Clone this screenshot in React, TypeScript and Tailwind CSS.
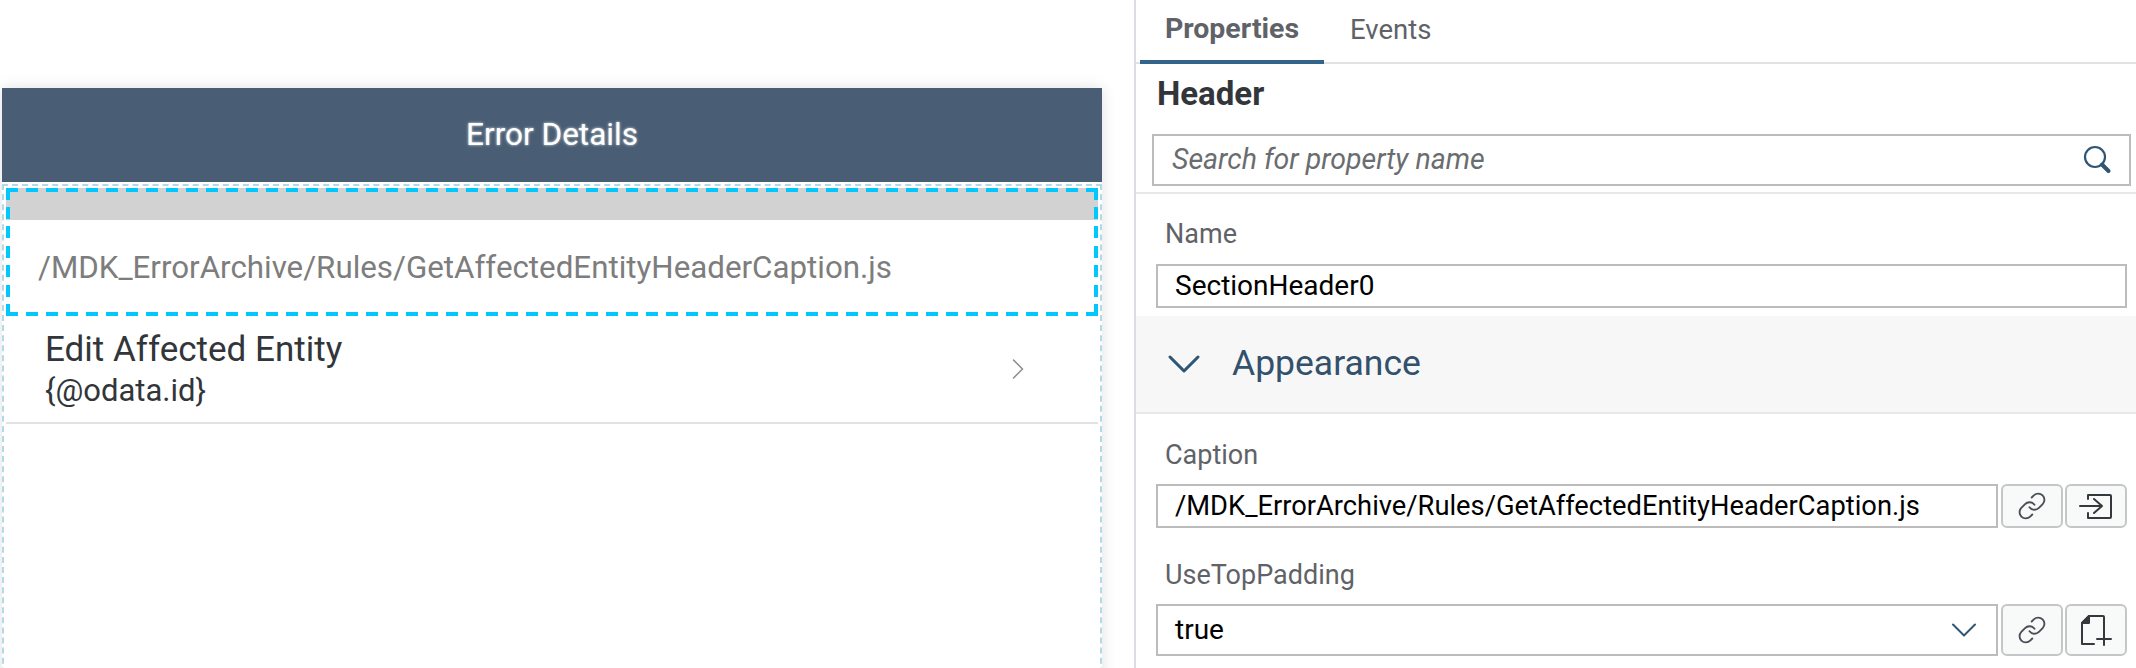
import { ChevronDown, ChevronRight, Link } from "lucide-react";
import type { ReactNode } from "react";

const CAPTION_PATH = "/MDK_ErrorArchive/Rules/GetAffectedEntityHeaderCaption.js";

function EnterIcon() {
  return (
    <svg width="34" height="26" viewBox="0 0 34 26" fill="none" stroke="#35393e" strokeWidth="2" strokeLinecap="round" strokeLinejoin="round">
      <path d="M9 6V2h22a1 1 0 0 1 1 1v21a1 1 0 0 1-1 1H9v-5" />
      <path d="M1 13h22M15 6l8 7-8 7" />
    </svg>
  );
}

function NewFileIcon() {
  return (
    <svg width="32" height="32" viewBox="0 0 32 32" fill="none" stroke="#35393e" strokeWidth="2" strokeLinecap="round" strokeLinejoin="round">
      <path d="M2 9v21h12M24 18V3a1 1 0 0 0-1-1H9L2 9" />
      <path d="M2 9 9 2v7z" fill="#35393e" />
      <path d="M17 25h14M24 18v13" />
    </svg>
  );
}

function FieldLabel({ children }: { children: ReactNode }) {
  return <div className="h-[30px] pl-[29px] text-[27px] leading-[30px] text-[#5f6368]">{children}</div>;
}

function IconButton({ children, className }: { children: ReactNode; className: string }) {
  return (
    <button className={`flex w-[62px] shrink-0 items-center justify-center rounded-[6px] border-2 border-[#c4c6c8] bg-[#f8f9f9] ${className}`}>
      {children}
    </button>
  );
}

function PreviewPane() {
  return (
    <div className="w-[1134px] shrink-0 pl-[2px] pr-[32px] pt-[88px]">
      <div className="shadow-[0_0_14px_rgba(0,0,0,0.12)]">
        <div className="flex h-[94px] items-center justify-center bg-[#495e74] text-[31.5px] text-white [text-shadow:0_0_3px_rgba(255,255,255,0.8)]">
          Error Details
        </div>
        <div className="mt-[2px] h-[520px] border-2 border-dashed border-[#b2d9e8] px-[2px] pt-[2px]">
          <div className="h-[128px] bg-[linear-gradient(#d2d2d2_0_32px,white_32px)] [background-repeat:no-repeat]">
            <div className="relative h-full">
              <div className="absolute inset-0 bg-[repeating-linear-gradient(90deg,#00c8ff_0_12px,transparent_12px_20px),repeating-linear-gradient(90deg,#00c8ff_0_12px,transparent_12px_20px),repeating-linear-gradient(0deg,#00c8ff_0_12px,transparent_12px_19.400px),repeating-linear-gradient(0deg,#00c8ff_0_12px,transparent_12px_19.400px)] [background-position:top_left,bottom_left,top_left,top_right] [background-repeat:no-repeat] [background-size:100%_4px,100%_4px,4px_100%,4px_100%]" />
              <div className="flex h-full items-center pl-[32px] pt-[32px] text-[31.300px] leading-[36px] text-[#7d7d7d]">
                {CAPTION_PATH}
              </div>
            </div>
          </div>
          <div className="flex h-[108px] items-center border-b-2 border-[#e2e2e2] pl-[39px] pr-[62px]">
            <div className="flex-1 pt-[2px]">
              <div className="text-[35px] leading-[40px] text-[#32363a]">Edit Affected Entity</div>
              <div className="mt-[2px] text-[31px] leading-[38px] text-[#32363a]">{"{@odata.id}"}</div>
            </div>
            <ChevronRight className="size-[36px] text-[#8a8a8a]" strokeWidth={1} />
          </div>
        </div>
      </div>
    </div>
  );
}

function PropertiesPane() {
  return (
    <div className="h-[668px] flex-1 overflow-hidden border-l-2 border-[#dcdde2] bg-white">
      <div className="flex h-[64px] border-b-2 border-[#e0e2e5] pl-[4px]">
        <div className="-mb-[2px] flex w-[184px] items-center justify-center border-b-4 border-[#33648c] pb-[2px] text-[28.500px] font-bold text-[#5f6368]">
          Properties
        </div>
        <div className="ml-[26px] flex items-center pb-[2px] text-[27.500px] text-[#5f6368]">Events</div>
      </div>
      <div className="h-[62px] pl-[21px] pt-[12px] text-[33px] leading-[36px] font-bold text-[#32363a]">Header</div>
      <div className="border-b-2 border-[#e8e8e8] pb-[6px] pl-[16px] pr-[5px]">
        <div className="mt-[8px] flex h-[52px] items-center border-2 border-[#bcbcbc] pl-[18px] pr-[16px] text-[28.500px] italic text-[#6a6d70]">
          <span className="flex-1">Search for property name</span>
          <svg width="30" height="30" viewBox="0 0 30 30" fill="none" stroke="#2f5575" strokeLinecap="round">
            <circle cx="12" cy="12" r="10" strokeWidth="2.200" />
            <path d="M19 19.500 25.500 26" strokeWidth="4" />
          </svg>
        </div>
      </div>
      <div className="pt-[25px]">
        <FieldLabel>Name</FieldLabel>
        <div className="ml-[20px] mr-[9px] mt-[15px] flex h-[44px] items-center border-2 border-[#bcbcbc] pl-[17px] text-[28px] text-black">
          SectionHeader0
        </div>
      </div>
      <div className="mt-[8px] flex h-[98px] items-center border-b-2 border-[#e8e8e8] bg-[#f7f7f7] pl-[20px] text-[35.500px] text-[#33506c]">
        <ChevronDown className="mr-[20px] size-[56px] text-[#2f5575]" strokeWidth={1.3} />
        Appearance
      </div>
      <div className="pt-[26px]">
        <FieldLabel>Caption</FieldLabel>
        <div className="ml-[20px] mr-[9px] mt-[14px] flex">
          <div className="flex h-[44px] w-[842px] shrink-0 items-center border-2 border-[#bcbcbc] pl-[17px] text-[27.300px] text-black">
            {CAPTION_PATH}
          </div>
          <IconButton className="ml-[3px] h-[44px]">
            <Link className="size-[30px] text-[#4a4f55]" strokeWidth={1.5} />
          </IconButton>
          <IconButton className="ml-[2px] h-[44px]"><EnterIcon /></IconButton>
        </div>
      </div>
      <div className="pt-[32px]">
        <FieldLabel>UseTopPadding</FieldLabel>
        <div className="ml-[20px] mr-[9px] mt-[14px] flex">
          <div className="flex h-[52px] w-[842px] shrink-0 items-center justify-between border-2 border-[#bcbcbc] pl-[17px] pr-[10px] text-[28px] text-black">
            true
            <ChevronDown className="size-[44px] text-[#2f5575]" strokeWidth={1.1} />
          </div>
          <IconButton className="ml-[3px] h-[52px]">
            <Link className="size-[30px] text-[#4a4f55]" strokeWidth={1.5} />
          </IconButton>
          <IconButton className="ml-[2px] h-[52px]"><NewFileIcon /></IconButton>
        </div>
      </div>
    </div>
  );
}

export default function App() {
  return (
    <div className="flex h-[668px] w-[2136px] overflow-hidden bg-white font-['Roboto',sans-serif]">
      <PreviewPane />
      <PropertiesPane />
    </div>
  );
}
